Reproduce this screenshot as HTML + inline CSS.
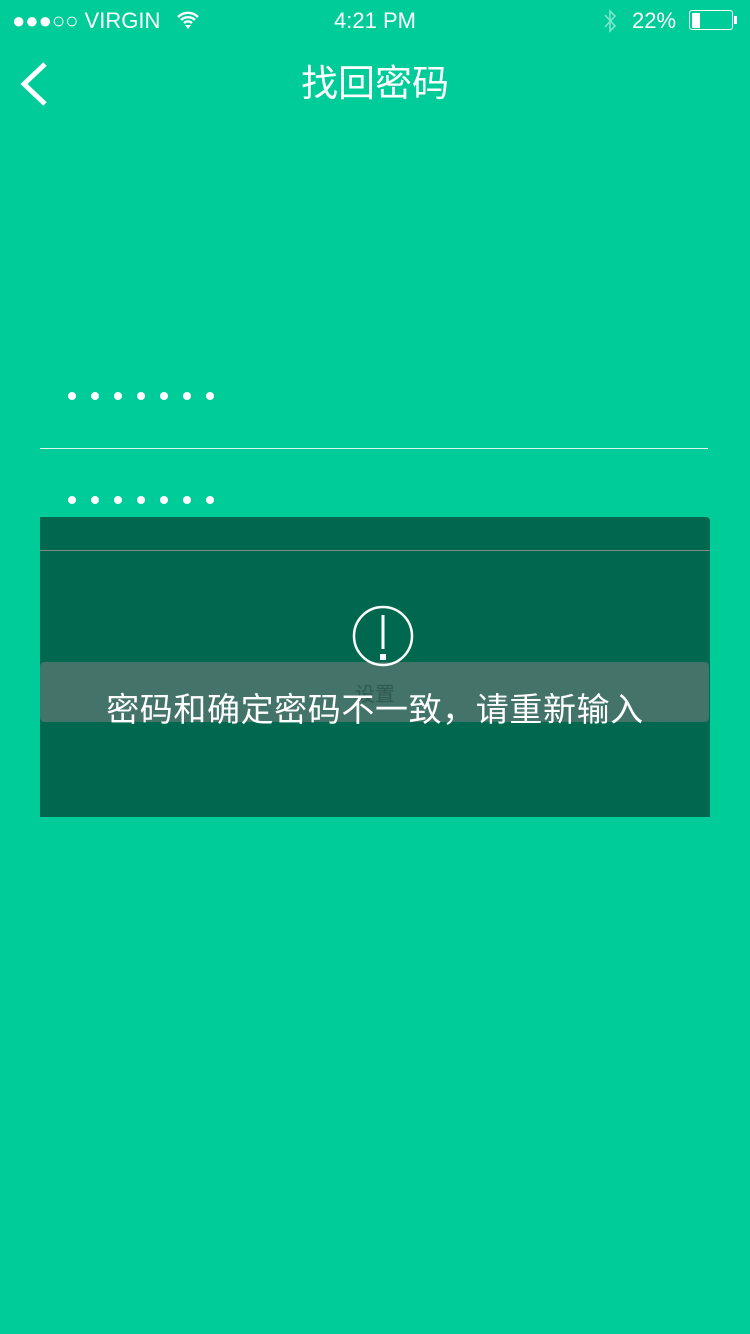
<!DOCTYPE html>
<html><head><meta charset="utf-8"><style>
body{margin:0;width:750px;height:1334px;background:#00cc99;position:relative;overflow:hidden;font-family:"Liberation Sans","Noto Sans CJK SC",sans-serif;color:#fff}
.a{position:absolute}
.dot{position:absolute;width:8px;height:8px;border-radius:50%;background:#fff}
</style></head><body>
<div class="a" style="left:12px;top:8px;font-size:22px;line-height:26px">●●●○○ VIRGIN</div>
<svg class="a" style="left:176px;top:10px" width="24" height="20" viewBox="0 0 24 20"><path d="M2 7a14 14 0 0 1 20 0M5 10a10 10 0 0 1 14 0M8 13a6 6 0 0 1 8 0" stroke="#fff" stroke-width="2.4" fill="none"/><path d="M9 15l3 4 3-4z" fill="#fff"/></svg>
<div class="a" style="left:0;width:750px;top:8px;text-align:center;font-size:22px;line-height:26px">4:21 PM</div>
<svg class="a" style="left:602px;top:8px" width="16" height="26" viewBox="0 0 16 26"><path d="M3 7l10 11-5 5V3l5 5-10 11" stroke="#7fe6cc" stroke-width="1.6" fill="none"/></svg>
<div class="a" style="left:632px;top:8px;font-size:22px;line-height:26px">22%</div>
<div class="a" style="left:689px;top:10px;width:42px;height:18px;border:1.5px solid #fff;border-radius:3px"></div>
<div class="a" style="left:692px;top:13px;width:8px;height:15px;background:#fff"></div>
<div class="a" style="left:734px;top:16px;width:3px;height:8px;background:#fff"></div>
<svg class="a" style="left:18px;top:60px" width="32" height="48" viewBox="0 0 32 48"><path d="M27 4L6 24l21 20" stroke="#fff" stroke-width="5" fill="none"/></svg>
<div class="a" style="left:0;width:750px;top:61px;text-align:center;font-size:37px;line-height:46px">找回密码</div>
<div class="dot" style="left:68px;top:392px"></div><div class="dot" style="left:91px;top:392px"></div><div class="dot" style="left:114px;top:392px"></div><div class="dot" style="left:137px;top:392px"></div><div class="dot" style="left:160px;top:392px"></div><div class="dot" style="left:183px;top:392px"></div><div class="dot" style="left:206px;top:392px"></div>
<div class="a" style="left:40px;top:448px;width:668px;height:1px;background:#e0f5ee"></div>
<div class="dot" style="left:68px;top:496px"></div><div class="dot" style="left:91px;top:496px"></div><div class="dot" style="left:114px;top:496px"></div><div class="dot" style="left:137px;top:496px"></div><div class="dot" style="left:160px;top:496px"></div><div class="dot" style="left:183px;top:496px"></div><div class="dot" style="left:206px;top:496px"></div>
<div class="a" style="left:40px;top:517px;width:670px;height:300px;background:#00684e;border-radius:0 4px 0 0"></div>
<div class="a" style="left:40px;top:550px;width:670px;height:1px;background:#7a8a85"></div>
<div class="a" style="left:40px;top:662px;width:669px;height:60px;background:#437369;border-radius:4px"></div>
<div class="a" style="left:0;width:750px;top:678px;text-align:center;font-size:20px;color:#2f5a50">设置</div>
<svg class="a" style="left:352px;top:605px" width="62" height="62" viewBox="0 0 62 62"><ellipse cx="31" cy="31" rx="29" ry="29" stroke="#fff" stroke-width="2.5" fill="none"/><rect x="29.5" y="10" width="3" height="34" fill="#fff"/><rect x="28" y="49" width="6" height="6" fill="#fff"/></svg>
<div class="a" style="left:0;width:750px;top:688px;text-align:center;font-size:33px;line-height:44px;letter-spacing:0.6px">密码和确定密码不一致，请重新输入</div>
</body></html>
